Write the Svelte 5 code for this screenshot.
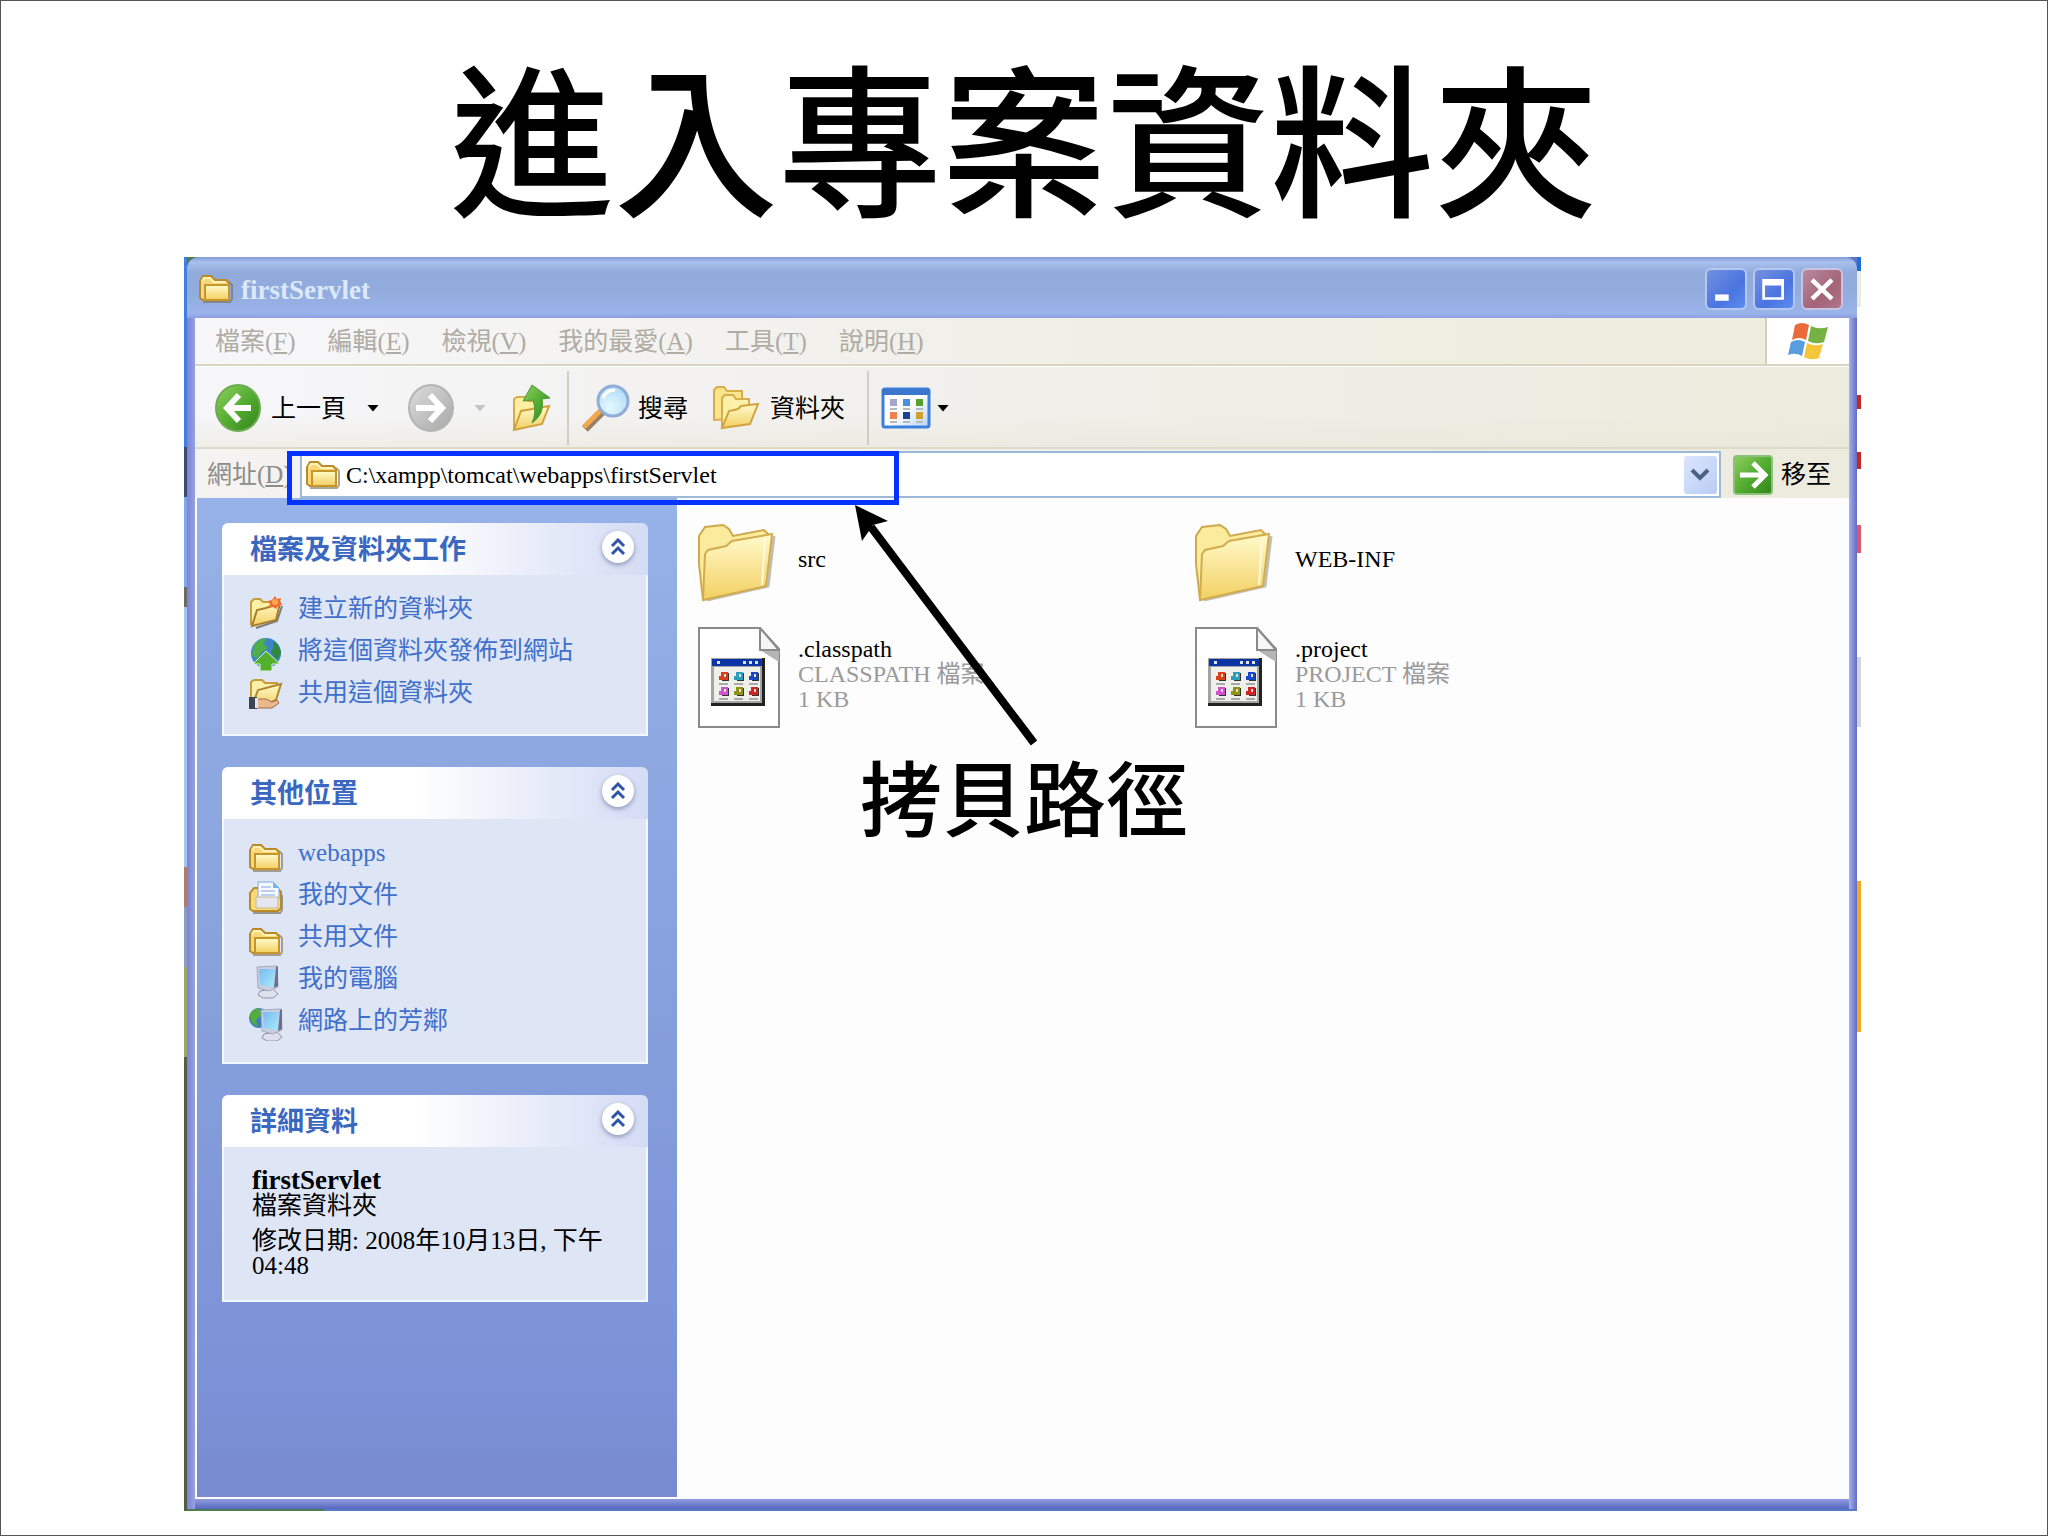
<script lang="ts">
	type Task = { icon: string; text: string };

	const menus = [
		{ text: '檔案', key: 'F' },
		{ text: '編輯', key: 'E' },
		{ text: '檢視', key: 'V' },
		{ text: '我的最愛', key: 'A' },
		{ text: '工具', key: 'T' },
		{ text: '說明', key: 'H' }
	];

	const panels: { title: string; tasks: Task[] }[] = [
		{
			title: '檔案及資料夾工作',
			tasks: [
				{ icon: 'new', text: '建立新的資料夾' },
				{ icon: 'publish', text: '將這個資料夾發佈到網站' },
				{ icon: 'share', text: '共用這個資料夾' }
			]
		},
		{
			title: '其他位置',
			tasks: [
				{ icon: 'folder', text: 'webapps' },
				{ icon: 'documents', text: '我的文件' },
				{ icon: 'folder', text: '共用文件' },
				{ icon: 'computer', text: '我的電腦' },
				{ icon: 'network', text: '網路上的芳鄰' }
			]
		}
	];

	const files = [
		{ name: 'src', folder: true },
		{ name: 'WEB-INF', folder: true },
		{ name: '.classpath', type: 'CLASSPATH 檔案', size: '1 KB' },
		{ name: '.project', type: 'PROJECT 檔案', size: '1 KB' }
	];

	const glyphColors = ['#d8401c', '#2a9db8', '#1648c8', '#d052d0', '#8c9412', '#d02424'];
	const viewColors = ['#a9a3cf', '#4a8ee6', '#5aa02c', '#f0804c', '#1c409c', '#d0a030'];

	let path = $state('C:\\xampp\\tomcat\\webapps\\firstServlet');
	let open = $state([true, true, true]);
</script>

<svg class="defs" width="0" height="0" aria-hidden="true">
	<defs>
		<linearGradient id="gold" x1="0" y1="0" x2="0" y2="1">
			<stop offset="0" stop-color="#fffbcb" />
			<stop offset="1" stop-color="#f3cf62" />
		</linearGradient>
		<linearGradient id="green" x1="0" y1="0" x2="1" y2="1">
			<stop offset="0" stop-color="#8fd060" />
			<stop offset="0.5" stop-color="#55ad32" />
			<stop offset="1" stop-color="#2f8418" />
		</linearGradient>
		<linearGradient id="grey" x1="0" y1="0" x2="1" y2="1">
			<stop offset="0" stop-color="#dcdcdc" />
			<stop offset="1" stop-color="#a8a8a8" />
		</linearGradient>
		<radialGradient id="lens" cx="0.4" cy="0.7" r="0.7">
			<stop offset="0" stop-color="#e4fafe" />
			<stop offset="1" stop-color="#b3dcf8" />
		</radialGradient>
		<linearGradient id="screen" x1="0" y1="0" x2="1" y2="1">
			<stop offset="0" stop-color="#7cb8f0" />
			<stop offset="1" stop-color="#a4ecfa" />
		</linearGradient>
		<linearGradient id="pane" x1="0" y1="0" x2="1" y2="1">
			<stop offset="0.5" stop-color="#ffffff" />
			<stop offset="1" stop-color="#b4d4fa" />
		</linearGradient>
	</defs>
</svg>

{#snippet miniFolder()}
	<path d="M4 29h27l2-3V12l-3-3" fill="none" stroke="#7a6a50" stroke-width="2" opacity="0.6" />
	<path d="M1 25V8l3-5h8l4 4h11l3 3v17H4z" fill="#f7d97a" stroke="#b88a2a" stroke-width="2" />
	<path d="M3 8l2-3h6l4 4h12" fill="none" stroke="#fff3b8" stroke-width="2" />
	<path d="M6 27V12h24v15z" fill="url(#gold)" stroke="#c6952c" stroke-width="2" />
{/snippet}

{#snippet monitor()}
	<path d="M11 26l13-2 5 5-5 4H14l-5-3z" fill="#dfe0ec" stroke="#8f92a8" />
	<path d="M8 2l20-1 1 21-9 4-11-3z" fill="#c9cde0" stroke="#a4aac4" />
	<path d="M10 4h16l-2 18-13-2z" fill="url(#screen)" />
	<path d="M27 2l2-1v20l-4 2z" fill="#67708f" />
{/snippet}

{#snippet taskIcon(name: string)}
	<svg class="task-icon" viewBox="0 0 34 34" aria-hidden="true">
		{#if name === 'folder'}
			<g class="low">{@render miniFolder()}</g>
		{:else if name === 'new'}
			<path d="M7 33l21-7 5-15" fill="none" stroke="#55504a" stroke-width="2" opacity="0.7" />
			<path d="M2 30V7l3-3h6l3 3h11l3 4" fill="#fdf0a8" stroke="#c89c38" stroke-width="2" />
			<path d="M3 31l5-16 9-2 14-5-4 17z" fill="url(#gold)" stroke="#a87e2c" stroke-width="2" />
			<path d="M26 1l2 3 4-1-1 4 2 3-4 1-2 3-3-2-4 1 1-4-2-3 4-1z" fill="#f06c2c" />
			<circle cx="26" cy="7" r="3" fill="#ffa850" />
		{:else if name === 'publish'}
			<circle cx="17" cy="16" r="15" fill="#3f83c8" />
			<path d="M5 8q6-7 12-7l-2 6 4 4-7 5-4 6-5-4z" fill="#4fae48" />
			<path d="M24 4q8 6 8 13l-4 6-6-8 3-5z" fill="#2e8a3a" />
			<path d="M17 14l14 13h-8v7H11v-7H4z" fill="#52b02c" stroke="#e2f4d8" />
		{:else if name === 'share'}
			<path d="M2 28V3l3-2h8l3 3h12v7" fill="#fdf0a8" stroke="#c89c38" stroke-width="2" />
			<path d="M3 27l6-16 8-2 15-4-5 16-10 5z" fill="url(#gold)" stroke="#b08830" stroke-width="2" />
			<path d="M8 20h9l6 3 5-2 2 3-7 5H8z" fill="#eab88c" stroke="#9a6a44" />
			<path d="M0 18h8v12H0z" fill="#3c4454" />
			<path d="M6 19h3v10H6z" fill="#dfe4f0" />
		{:else if name === 'documents'}
			<path d="M4 32h27l2-3V14" fill="none" stroke="#6a604c" stroke-width="2" opacity="0.6" />
			<path d="M1 28V12l4-5h23l4 4v16l-3 3H4z" fill="#f7d97a" stroke="#b88a2a" stroke-width="2" />
			<path d="M9 18V1h15l6 6v11z" fill="#f6faff" stroke="#7fa4dc" />
			<path d="M24 1l6 6h-6z" fill="#6cb4ec" />
			<path d="M12 6h10M12 10h14M12 14h14" stroke="#bccdf2" stroke-width="2" />
			<path d="M7 16h22v11H7z" fill="#e4e8ee" stroke="#c4b890" />
		{:else if name === 'computer'}
			{@render monitor()}
		{:else}
			<circle cx="10" cy="11" r="10" fill="#3b7cc4" />
			<path d="M1 7q4-6 10-6l1 8-5 4 2 7q-9-4-8-13z" fill="#53ac3e" />
			<g class="shifted">{@render monitor()}</g>
		{/if}
	</svg>
{/snippet}

{#snippet chevron(up: boolean)}
	<svg viewBox="0 0 16 18" width="16" height="18" aria-hidden="true">
		<path
			d={up ? 'M2 8l6-6 6 6M2 16l6-6 6 6' : 'M2 2l6 6 6-6M2 10l6 6 6-6'}
			fill="none"
			stroke="#2f55a8"
			stroke-width="3"
		/>
	</svg>
{/snippet}

{#snippet panelHead(title: string, i: number)}
	<header class="panel-head">
		<h2>{title}</h2>
		<button class="toggle" aria-label={title} aria-expanded={open[i]} onclick={() => (open[i] = !open[i])}>
			{@render chevron(open[i])}
		</button>
	</header>
{/snippet}

<main class="slide">
	<h1>進入專案資料夾</h1>

	<div class="desktop">
		<section class="window">
			<header class="title-bar">
				<svg class="title-icon" viewBox="0 0 34 32" aria-hidden="true">{@render miniFolder()}</svg>
				<span class="title-text">firstServlet</span>
				<button class="win-btn" aria-label="最小化">
					<svg viewBox="0 0 42 42"><path d="M9 27h15v7H9z" fill="#fff" /></svg>
				</button>
				<button class="win-btn" aria-label="最大化">
					<svg viewBox="0 0 42 42">
						<path d="M8 10h24v23H8zM11 17v13h18V17z" fill="#fff" fill-rule="evenodd" />
					</svg>
				</button>
				<button class="win-btn close" aria-label="關閉">
					<svg viewBox="0 0 42 42">
						<path d="M10 11l22 21M32 11L10 32" stroke="#fff" stroke-width="5" />
					</svg>
				</button>
			</header>

			<nav class="menu-bar">
				{#each menus as menu}
					<button>{menu.text}(<u>{menu.key}</u>)</button>
				{/each}
				<div class="flag">
					<svg viewBox="0 0 42 38" width="42" height="38" aria-hidden="true">
						<path d="M8 3q7-4 14 0l-3 15q-7-4-14 0z" fill="#ea6c3a" />
						<path d="M24 4q8 4 17 1l-4 15q-8 3-16-1z" fill="#76b243" />
						<path d="M4 20q7-4 14 0l-3 14q-7-4-14-1z" fill="#5a9ce0" />
						<path d="M20 21q8 4 16 1l-4 14q-8 3-15-1z" fill="#f4c63c" />
					</svg>
				</div>
			</nav>

			<div class="toolbar">
				<button class="tool">
					<svg width="46" height="48" viewBox="0 0 46 48" aria-hidden="true">
						<ellipse cx="23" cy="24" rx="22" ry="23" fill="url(#green)" stroke="#6cab50" stroke-width="2" />
						<path d="M36 24H13M24 11L12 24l12 13" fill="none" stroke="#fff" stroke-width="6" />
					</svg>
					上一頁
				</button>
				<button class="drop" aria-label="上一頁"></button>
				<button class="tool forward" aria-label="下一頁" disabled>
					<svg width="46" height="48" viewBox="0 0 46 48" aria-hidden="true">
						<ellipse cx="23" cy="24" rx="22" ry="23" fill="url(#grey)" stroke="#b4b4b4" stroke-width="2" />
						<path d="M8 24h25M22 11l12 13-12 13" fill="none" stroke="#fff" stroke-width="6" />
					</svg>
				</button>
				<button class="drop faded" aria-label="下一頁" disabled></button>
				<button class="tool up" aria-label="上一層">
					<svg width="40" height="48" viewBox="0 0 40 48" aria-hidden="true">
						<path d="M2 45V15l3-2h8l3 4h14v9" fill="#fdeea0" stroke="#d6ac48" stroke-width="2" />
						<path d="M2 46l7-19 28-5-7 18z" fill="url(#gold)" stroke="#d0a03c" stroke-width="2" />
						<path d="M20 1l18 13-8 1q3 15-10 24 5-11 1-23l-10 1z" fill="url(#green)" stroke="#4a9a38" />
					</svg>
				</button>
				<span class="divider"></span>
				<button class="tool search">
					<svg width="50" height="50" viewBox="0 0 50 50" aria-hidden="true">
						<path d="M4 46l17-17" stroke="#9b8064" stroke-width="8" />
						<path d="M3 44l16-16" stroke="#f0a94c" stroke-width="5" />
						<circle cx="32" cy="18" r="15" fill="url(#lens)" stroke="#92acd8" stroke-width="3" />
						<path d="M22 15q3-8 12-8" fill="none" stroke="#fff" stroke-width="3" />
					</svg>
					搜尋
				</button>
				<button class="tool folders">
					<svg width="48" height="44" viewBox="0 0 48 44" aria-hidden="true">
						<path d="M2 34V4l3-3h7l3 4h15v27z" fill="#fae58c" stroke="#d8ae4c" stroke-width="2" />
						<path d="M10 41V12l3-3h8l3 4h13v12" fill="#fdf0a8" stroke="#d8ae4c" stroke-width="2" />
						<path d="M10 42l7-17 9-2 3-3 17-2-8 20z" fill="url(#gold)" stroke="#d2a440" stroke-width="2" />
					</svg>
					資料夾
				</button>
				<span class="divider"></span>
				<button class="tool" aria-label="檢視">
					<svg width="50" height="42" viewBox="0 0 50 42" aria-hidden="true">
						<rect x="2" y="2" width="46" height="38" rx="2" fill="url(#pane)" stroke="#3c80dc" stroke-width="3" />
						<path d="M1 2h48v6H1z" fill="#3a76cc" />
						{#each viewColors as color, i}
							<rect x={9 + (i % 3) * 13} y={i < 3 ? 12 : 25} width="7" height="7" fill={color} />
							<rect x={9 + (i % 3) * 13} y={i < 3 ? 21 : 34} width="7" height="2" fill="#b8b8b8" />
						{/each}
					</svg>
				</button>
				<button class="drop views" aria-label="檢視"></button>
			</div>

			<div class="address-bar">
				<label for="address">網址(<u>D</u>)</label>
				<div class="address-box">
					<svg class="title-icon" viewBox="0 0 34 32" aria-hidden="true">{@render miniFolder()}</svg>
					<input id="address" type="text" bind:value={path} />
					<button class="combo" aria-label="網址清單">
						<svg width="20" height="14" viewBox="0 0 20 14" aria-hidden="true">
							<path d="M2 2l8 8 8-8" fill="none" stroke="#4d6185" stroke-width="4" />
						</svg>
					</button>
				</div>
				<button class="go">
					<svg width="40" height="40" viewBox="0 0 40 40" aria-hidden="true">
						<rect x="1" y="1" width="38" height="38" rx="3" fill="url(#green)" stroke="#8cc07c" stroke-width="2" />
						<path d="M7 20h24M20 8l12 12-12 12" fill="none" stroke="#fff" stroke-width="5" />
					</svg>
					移至
				</button>
				<div class="highlight"></div>
			</div>

			<div class="body">
				<aside>
					{#each panels as panel, i}
						<section class="panel">
							{@render panelHead(panel.title, i)}
							{#if open[i]}
								<ul>
									{#each panel.tasks as task}
										<li>{@render taskIcon(task.icon)}<a href="#{task.icon}">{task.text}</a></li>
									{/each}
								</ul>
							{/if}
						</section>
					{/each}
					<section class="panel">
						{@render panelHead('詳細資料', 2)}
						{#if open[2]}
							<div class="details">
								<strong>firstServlet</strong>
								<p>檔案資料夾</p>
								<p class="modified">修改日期: 2008年10月13日, 下午 04:48</p>
							</div>
						{/if}
					</section>
				</aside>

				<div class="files">
					{#each files as file}
						<div class="file">
							{#if file.folder}
								<svg width="82" height="78" viewBox="0 0 82 78" aria-hidden="true">
									<path d="M9 76l61-14 6-50" fill="none" stroke="#77705c" stroke-width="3" opacity="0.45" />
									<path d="M5 76L1 40V12l6-9 18-2 6 4 4 7 31-6 4 4-3 50z" fill="#fbeb9c" stroke="#cfa94c" stroke-width="2" />
									<path d="M5 76l2-46 3-4 18-4 6-5 40-7-6 52z" fill="url(#gold)" stroke="#d2ac4e" stroke-width="2" />
									<path d="M67 15l-3 46" stroke="#fffbe0" stroke-width="2" />
								</svg>
							{:else}
								<svg width="82" height="102" viewBox="0 0 82 102" aria-hidden="true">
									<path d="M1 1h61l19 21v78H1z" fill="#fff" stroke="#8a8a8a" stroke-width="2" />
									<path d="M62 23h19v12z" fill="#b5b5b5" />
									<path d="M62 1v22h19z" fill="#f6f6f6" stroke="#8a8a8a" stroke-width="2" />
									<path d="M13 31h54v48H13z" fill="#222" />
									<path d="M13 31h51v45H13z" fill="#a4a4a4" />
									<path d="M16 40h46v34H16z" fill="#f0f0ea" />
									<path d="M14 32h50v7H14z" fill="#0a34a4" />
									<path d="M19 34h3v3h-3zM45 34h3v3h-3zM51 34h3v3h-3zM57 34h3v3h-3z" fill="#dfe4f4" />
									{#each glyphColors as color, i}
										<rect x={24 + (i % 3) * 15} y={i < 3 ? 46 : 61} width="7" height="8" fill="#333" />
										<rect x={23 + (i % 3) * 15} y={i < 3 ? 45 : 60} width="7" height="8" fill={color} />
										<rect x={21 + (i % 3) * 15} y={i < 3 ? 49 : 64} width="4" height="4" fill={color} />
										<rect x={26 + (i % 3) * 15} y={i < 3 ? 47 : 62} width="2" height="3" fill="#f4d8d0" />
										<rect x={21 + (i % 3) * 15} y={i < 3 ? 56 : 71} width="9" height="2" fill="#aaa" />
									{/each}
								</svg>
							{/if}
							<div class="file-text">
								<span>{file.name}</span>
								{#if file.type}
									<span class="meta">{file.type}</span>
									<span class="meta">{file.size}</span>
								{/if}
							</div>
						</div>
					{/each}
				</div>

				<div class="callout">
					<svg width="186" height="244" viewBox="0 0 186 244" aria-hidden="true">
						<path d="M179 238L16 22" stroke="#000" stroke-width="8" />
						<path d="M0 0l33 16-15 4-11 16z" />
					</svg>
					<p>拷貝路徑</p>
				</div>
			</div>
		</section>
	</div>
</main>

<style>
	:global(body) {
		background: #fff;
	}

	.defs {
		position: absolute;
	}

	.slide {
		box-sizing: border-box;
		min-height: 100vh;
		display: flex;
		flex-direction: column;
		border: 1px solid #555;
		font-family: 'Liberation Serif', 'Noto Sans CJK TC', serif;
		font-size: 25px;
		line-height: 25px;
		color: #000;
	}

	h1 {
		margin: 16px 0 8px;
		font-family: 'Noto Sans CJK TC', sans-serif;
		font-size: 164px;
		font-weight: 500;
		line-height: 232px;
		text-align: center;
	}

	h2,
	p,
	ul {
		margin: 0;
		padding: 0;
	}

	button {
		border: 0;
		padding: 0;
		background: none;
		color: inherit;
		font: inherit;
		white-space: nowrap;
	}

	svg {
		display: block;
		flex-shrink: 0;
	}

	.desktop {
		flex: 1;
		display: flex;
		margin: 0 186px 24px 183px;
		padding: 0 4px 2px 3px;
		background:
			linear-gradient(#1f6be0 14px, #ecebe0 14px 50px, #fff 50px 138px, #c8281c 138px 152px, #fff 152px 195px, #c8281c 195px 212px, #fff 212px 268px, #d85a6c 268px 296px, #fff 296px 400px, #d5d2da 400px 470px, #fff 470px 624px, #f5a71e 624px 775px, #fff 775px)
				right / 4px 100% no-repeat,
			linear-gradient(#3f7fe0 190px, #3c4a6c 190px 240px, #7fa8ec 240px 330px, #6a6a60 330px 350px, #a8c4f0 350px 610px, #b07c6c 610px 650px, #8a9cc0 650px 710px, #98a868 710px 800px, #4c6048 800px)
				left / 3px 100% no-repeat,
			linear-gradient(90deg, #4c7c50 140px, #5a78c8 140px);
	}

	.window {
		flex: 1;
		display: flex;
		flex-direction: column;
		min-width: 0;
		padding: 0 8px 10px;
		border-radius: 12px 12px 0 0;
		background:
			linear-gradient(90deg, #7a84d2, #96a2e2 8px, transparent 8px),
			linear-gradient(270deg, #626cc4, #949ee2 6px, #a8b6ec 8px, transparent 8px),
			linear-gradient(0deg, #5468c0, #929cde 10px);
	}

	.title-bar {
		display: flex;
		align-items: center;
		gap: 6px;
		height: 61px;
		margin: 0 -8px;
		padding: 2px 14px 0 12px;
		box-sizing: border-box;
		border-radius: 12px 12px 0 0;
		background: linear-gradient(#8298d8, #a8c0ec 5px, #90aada 16px, #92acde 36px, #9ab4ea 56px, #8e9ee0);
	}

	.title-icon {
		width: 34px;
		height: 32px;
	}

	.title-text {
		flex: 1;
		margin-left: 2px;
		padding-top: 4px;
		color: #dde8fb;
		font-size: 27px;
		font-weight: bold;
	}

	.win-btn {
		width: 42px;
		height: 42px;
		box-sizing: border-box;
		border: 2px solid #b4c8f2;
		border-radius: 6px;
		background: linear-gradient(135deg, #7492e0, #4a74e0 60%, #5c8cf0);
	}

	.win-btn.close {
		background: linear-gradient(135deg, #b88a9c, #a46478 60%, #b07488);
		border-color: #c8c4e4;
	}

	.menu-bar {
		display: flex;
		align-items: center;
		gap: 32px;
		height: 48px;
		box-sizing: border-box;
		padding-left: 20px;
		border-bottom: 2px solid #d8d5c0;
		background: linear-gradient(90deg, #f7f7fa, #f0efe8 50%, #edecdc);
		color: #aeaca4;
	}

	.flag {
		align-self: stretch;
		display: flex;
		align-items: center;
		justify-content: center;
		width: 84px;
		margin-left: auto;
		border-left: 2px solid #d0cec0;
		box-sizing: border-box;
		background: #fff;
	}

	.toolbar {
		display: flex;
		align-items: center;
		height: 83px;
		box-sizing: border-box;
		padding: 2px 0 0 20px;
		border-top: 1px solid #fff;
		border-bottom: 2px solid #dcdacb;
		background: linear-gradient(transparent 60%, #e8e6d880), linear-gradient(90deg, #f6f6f9, #f0efea 50%, #ecebdd);
	}

	.tool {
		display: flex;
		align-items: center;
		gap: 10px;
	}

	.search {
		gap: 7px;
	}

	.drop {
		width: 12px;
		height: 7px;
		margin: 0 29px 0 21px;
		background: #000;
		clip-path: polygon(0 0, 100% 0, 50% 100%);
	}

	.drop.faded {
		margin: 0 26px 0 20px;
		background: #c4c4c0;
	}

	.drop.views {
		margin: 0 0 0 6px;
	}

	.divider {
		width: 2px;
		height: 74px;
		margin: 0 12px 0 15px;
		background: #cfcdc6;
	}

	.folders {
		margin: 0 7px 0 24px;
	}

	.address-bar {
		position: relative;
		display: flex;
		align-items: center;
		height: 49px;
		box-sizing: border-box;
		padding: 2px 18px 0 12px;
		background: linear-gradient(90deg, #f4f3f2, #f0efe8 50%, #ecebdd);
	}

	.address-bar label {
		width: 93px;
		color: #8e8c86;
	}

	.address-box {
		flex: 1;
		align-self: stretch;
		display: flex;
		align-items: center;
		gap: 6px;
		padding: 0 2px 0 4px;
		border: 2px solid #9db8d8;
		background: #fff;
	}

	.address-box input {
		flex: 1;
		min-width: 0;
		border: 0;
		padding: 2px 0 0;
		outline: 0;
		background: none;
		color: #000;
		font: inherit;
		font-size: 24px;
	}

	.combo {
		display: flex;
		align-items: center;
		justify-content: center;
		width: 33px;
		height: 38px;
		border-radius: 3px;
		background: linear-gradient(135deg, #dce6fc, #b8ccf6);
	}

	.go {
		display: flex;
		align-items: center;
		gap: 8px;
		margin-left: 12px;
	}

	.highlight {
		position: absolute;
		z-index: 1;
		left: 92px;
		top: 2px;
		width: 612px;
		height: 54px;
		box-sizing: border-box;
		border: 5px solid #0433ff;
	}

	.body {
		position: relative;
		flex: 1;
		display: flex;
		padding: 0 0 2px 2px;
		background: #fdfdfe;
	}

	aside {
		display: flex;
		flex-direction: column;
		gap: 31px;
		width: 480px;
		box-sizing: border-box;
		padding: 25px 29px 25px 25px;
		background: linear-gradient(#96b2e8, #86a0dc 50%, #7c92d8 88%, #788ad0);
	}

	.panel-head {
		display: flex;
		align-items: center;
		justify-content: space-between;
		height: 52px;
		padding: 0 14px 0 28px;
		border-radius: 6px 6px 0 0;
		background: linear-gradient(90deg, #fff 45%, #d4dcf4);
	}

	h2 {
		padding-top: 2px;
		color: #3a68c0;
		font-size: 27px;
		line-height: 27px;
	}

	.toggle {
		display: flex;
		align-items: center;
		justify-content: center;
		width: 32px;
		height: 32px;
		margin-bottom: 4px;
		border-radius: 50%;
		background: #fff;
		box-shadow: 0 2px 5px #8c94b8;
	}

	.panel ul,
	.details {
		border: 2px solid #f4f8ff;
		border-top: 0;
		background: #dee5f5;
		list-style: none;
	}

	.panel ul {
		padding: 12px 24px 21px 25px;
	}

	li {
		display: flex;
		align-items: center;
		gap: 15px;
		height: 42px;
	}

	.task-icon {
		width: 34px;
		height: 34px;
		margin-top: 8px;
	}

	.low {
		transform: translateY(3px);
	}

	.shifted {
		transform: translate(4px, 1px);
	}

	a {
		color: #4070cc;
		text-decoration: none;
	}

	a:hover {
		text-decoration: underline;
	}

	.details {
		padding: 21px 24px 22px 28px;
	}

	.details strong {
		display: block;
		font-size: 27px;
	}

	.modified {
		margin-top: 10px;
	}

	.files {
		flex: 1;
		display: grid;
		grid-template-columns: repeat(auto-fill, 497px);
		align-content: start;
		row-gap: 25px;
		padding: 26px 0 0 21px;
	}

	.file {
		display: flex;
		align-items: center;
		gap: 18px;
		font-size: 24px;
	}

	.file-text {
		display: flex;
		flex-direction: column;
		margin-bottom: 8px;
	}

	.meta {
		color: #9a9a9a;
	}

	.callout {
		position: absolute;
		left: 660px;
		top: 7px;
	}

	.callout p {
		margin: -4px 0 0 5px;
		font-family: 'Noto Sans CJK TC', sans-serif;
		font-size: 82px;
		font-weight: 500;
		line-height: 100px;
	}
</style>
